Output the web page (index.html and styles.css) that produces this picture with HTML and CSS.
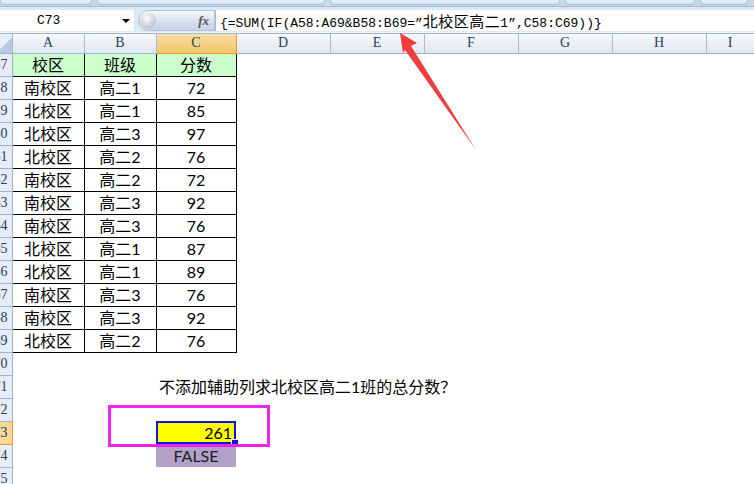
FILE: index.html
```html
<!DOCTYPE html>
<html lang="zh-CN">
<head>
    <meta charset="UTF-8">
    <meta name="viewport" content="width=device-width, initial-scale=1.0">
    <title>北校区高二1班总分</title>
    <link rel="stylesheet" href="styles.css">
</head>
<body>

    <div class="ribbon">
        <span class="grp" style="width:92px"></span>
        <span class="grp" style="width:228px"></span>
        <span class="grp" style="width:230px"></span>
        <span class="grp" style="width:130px"></span>
        <span class="grp" style="width:48px"></span>
    </div>

    <div class="fbar">
        <div class="namebox">
            <span class="cellref">C73</span>
            <span class="drop"></span>
        </div>
        <div class="fxpill">
            <span class="knob"></span>
            <span class="fx">fx</span>
        </div>
        <div class="formula">{=SUM(IF(A58:A69&amp;B58:B69=”<span class="cjk">北校区高二</span>1”,C58:C69))}</div>
    </div>
    <div class="fsep"></div>

    <table class="sheet">
        <colgroup>
            <col style="width:12px"><col style="width:72px"><col style="width:72px"><col style="width:80px">
            <col style="width:94px"><col style="width:94px"><col style="width:94px"><col style="width:94px"><col style="width:94px"><col style="width:48px">
        </colgroup>
        <thead>
            <tr>
                <th class="corner"></th>
                <th>A</th><th>B</th><th class="on">C</th><th>D</th><th>E</th><th>F</th><th>G</th><th>H</th><th>I</th>
            </tr>
        </thead>
        <tbody>
            <tr><td class="rh">57</td><td class="box head">校区</td><td class="box head">班级</td><td class="box head">分数</td><td colspan="6"></td></tr>
            <tr><td class="rh">58</td><td class="box">南校区</td><td class="box">高二1</td><td class="box">72</td><td colspan="6"></td></tr>
            <tr><td class="rh">59</td><td class="box">北校区</td><td class="box">高二1</td><td class="box">85</td><td colspan="6"></td></tr>
            <tr><td class="rh">60</td><td class="box">北校区</td><td class="box">高二3</td><td class="box">97</td><td colspan="6"></td></tr>
            <tr><td class="rh">61</td><td class="box">北校区</td><td class="box">高二2</td><td class="box">76</td><td colspan="6"></td></tr>
            <tr><td class="rh">62</td><td class="box">南校区</td><td class="box">高二2</td><td class="box">72</td><td colspan="6"></td></tr>
            <tr><td class="rh">63</td><td class="box">南校区</td><td class="box">高二3</td><td class="box">92</td><td colspan="6"></td></tr>
            <tr><td class="rh">64</td><td class="box">南校区</td><td class="box">高二3</td><td class="box">76</td><td colspan="6"></td></tr>
            <tr><td class="rh">65</td><td class="box">北校区</td><td class="box">高二1</td><td class="box">87</td><td colspan="6"></td></tr>
            <tr><td class="rh">66</td><td class="box">北校区</td><td class="box">高二1</td><td class="box">89</td><td colspan="6"></td></tr>
            <tr><td class="rh">67</td><td class="box">南校区</td><td class="box">高二3</td><td class="box">76</td><td colspan="6"></td></tr>
            <tr><td class="rh">68</td><td class="box">南校区</td><td class="box">高二3</td><td class="box">92</td><td colspan="6"></td></tr>
            <tr><td class="rh">69</td><td class="box">北校区</td><td class="box">高二2</td><td class="box">76</td><td colspan="6"></td></tr>
            <tr><td class="rh">70</td><td></td><td></td><td></td><td colspan="6"></td></tr>
            <tr><td class="rh">71</td><td></td><td></td><td class="note">不添加辅助列求北校区高二1班的总分数？</td><td colspan="6"></td></tr>
            <tr><td class="rh">72</td><td></td><td></td><td></td><td colspan="6"></td></tr>
            <tr><td class="rh on">73</td><td></td><td></td><td class="sel">261</td><td colspan="6"></td></tr>
            <tr><td class="rh">74</td><td></td><td></td><td class="bool">FALSE</td><td colspan="6"></td></tr>
            <tr><td class="rh">75</td><td></td><td></td><td></td><td colspan="6"></td></tr>
        </tbody>
    </table>

    <!-- 标注：框出结果单元格，箭头指向公式 -->
    <div class="mark"></div>
    <svg class="arrow" width="754" height="484" viewBox="0 0 754 484">
        <polygon points="400,33 417,43 411,46 476,150 405,50 403,53" fill="#f03c3c"/>
    </svg>

</body>
</html>
```

FILE: styles.css
```css
* {
    box-sizing: border-box;
}
body {
    margin: 0;
    width: 754px;
    height: 484px;
    overflow: hidden;
    position: relative;
    background: #fff;
    font-family: Lato, "Noto Sans CJK SC", sans-serif;
    color: #000;
}

/* 功能区底边 */
.ribbon {
    height: 7px;
    background: #c9d9ee;
    display: flex;
    gap: 5px;
    border-bottom: 1px solid #9cb7da;
}
.ribbon .grp {
    height: 5px;
    background: linear-gradient(#e6eef9, #d6e3f4);
    border: 1px solid #a9c0de;
    border-top: none;
    border-radius: 0 0 4px 4px;
}

/* 编辑栏 */
.fbar {
    height: 25px;
    background: #dfe8f5;
    display: flex;
    align-items: center;
    padding-top: 2px;
}
.namebox {
    width: 134px;
    height: 21px;
    background: #fff;
    display: flex;
    align-items: center;
    justify-content: space-between;
    padding: 0 4px 0 37px;
    font-family: "Liberation Mono", monospace;
    font-size: 13px;
}
.drop {
    width: 0;
    height: 0;
    border-left: 4px solid transparent;
    border-right: 4px solid transparent;
    border-top: 4px solid #000;
}
.fxpill {
    width: 77px;
    height: 21px;
    margin-left: 4px;
    border-radius: 11px 0 0 11px;
    background: linear-gradient(#f7f9fc, #d3dded 60%, #c6d3e6);
    border: 1px solid #b1c3da;
    display: flex;
    align-items: center;
    justify-content: space-between;
    padding: 0 5px 0 2px;
}
.knob {
    width: 15px;
    height: 15px;
    border-radius: 50%;
    background: radial-gradient(circle at 40% 35%, #fff, #c9d0da 60%, #9aa6b6);
}
.fx {
    font-family: "Liberation Serif", serif;
    font-style: italic;
    font-weight: bold;
    font-size: 13px;
    color: #555;
}
.formula {
    flex: 1;
    height: 21px;
    background: #fff;
    border-left: 1px solid #a5bbd6;
    padding-left: 4px;
    font-family: "Liberation Mono", monospace;
    font-size: 13px;
    line-height: 21px;
    white-space: nowrap;
}
.formula .cjk {
    font-family: "Noto Sans CJK SC", sans-serif;
    font-size: 15px;
    letter-spacing: 0.5px;
}
.fsep {
    height: 2px;
    background: #f2f6fb;
    border-bottom: 1px solid #9fb7d3;
}

/* 工作表 */
.sheet {
    table-layout: fixed;
    border-collapse: collapse;
    width: 754px;
    font-size: 16px;
    line-height: 18px;
}
.sheet th {
    height: 19px;
    padding: 0;
    font-family: "Liberation Serif", serif;
    font-weight: normal;
    font-size: 14px;
    line-height: 16px;
    color: #27405c;
    background: linear-gradient(#f7f9fc, #dfe6f0);
    border-right: 1px solid #a7bcd6;
    border-bottom: 1px solid #9eb4cf;
}
.sheet th.on {
    background: linear-gradient(#fadfaa, #f2c466);
    border-bottom: 1px solid #f29436;
    border-right: 1px solid #f29436;
}
.sheet th.corner {
    background: linear-gradient(135deg, #e8eef6 50%, #b7c9de 50%);
}
.sheet td {
    height: 23px;
    padding: 0 3px;
    text-align: center;
    vertical-align: middle;
    white-space: nowrap;
}
/* 行号列很窄，号码靠右，左侧被截掉 */
.sheet td.rh {
    padding: 0 4px 0 0;
    direction: rtl;
    text-align: right;
    overflow: hidden;
    text-overflow: clip;
    font-family: "Liberation Serif", serif;
    font-size: 14px;
    color: #27405c;
    background: #e6edf7;
    border-right: 1px solid #9eb4cf;
    border-bottom: 1px solid #9eb4cf;
}
.sheet td.rh.on {
    background: #fdd795;
    border-right: 1px solid #f29436;
    border-bottom: 1px solid #f29436;
}
.sheet td.box {
    border: 1px solid #000;
}
.sheet td.head {
    background: #ccffcc;
}
.sheet td.note {
    text-align: left;
    overflow: visible;
}
.sheet td.sel {
    position: relative;
    text-align: right;
    background: #ffff00;
    box-shadow: inset 0 0 0 2px #1414e6;
    padding-right: 4px;
}
.sheet td.sel::after {
    content: "";
    position: absolute;
    right: -3px;
    bottom: -3px;
    width: 6px;
    height: 6px;
    background: #1414e6;
    border: 1px solid #fff;
}
.sheet td.bool {
    background: #b1a0c7;
    color: #1d1d1d;
}

/* 标注 */
.mark {
    position: absolute;
    left: 108px;
    top: 405px;
    width: 162px;
    height: 42px;
    border: 3px solid #ec24ec;
}
.arrow {
    position: absolute;
    left: 0;
    top: 0;
    pointer-events: none;
}
```
